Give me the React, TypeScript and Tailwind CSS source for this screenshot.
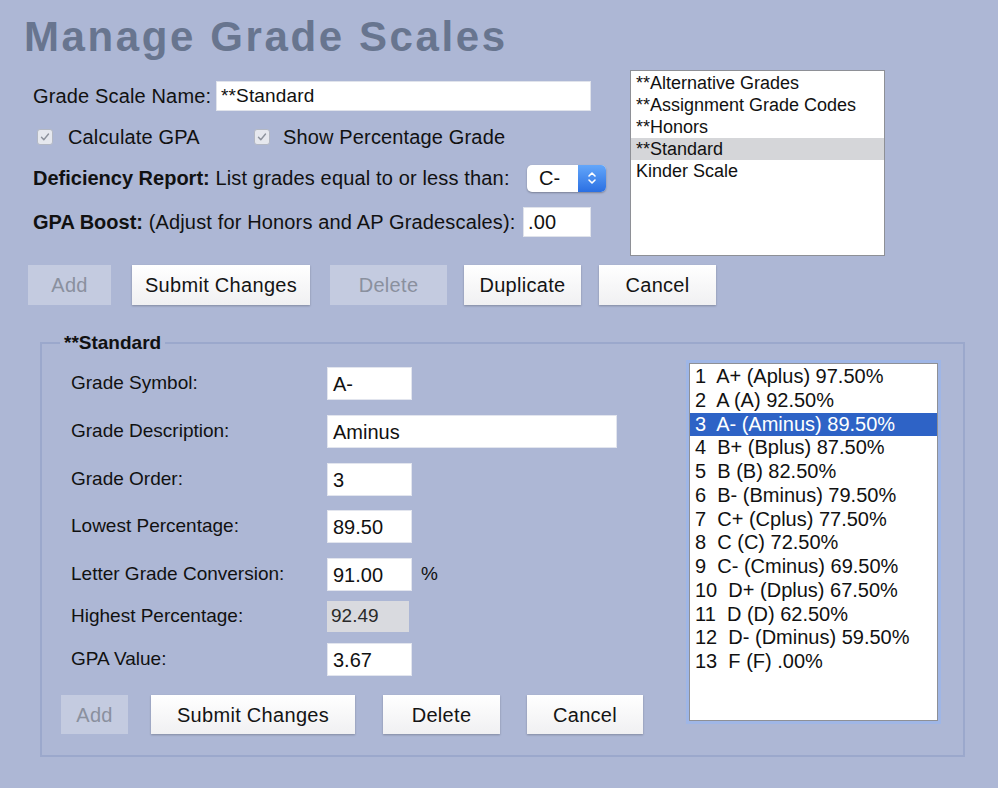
import React from "react";

function Check() {
  return (
    <div className="flex h-[16px] w-[16px] items-center justify-center rounded-[3px] border border-[#b3b8c4] bg-[#e6e8ee]">
      <svg width="12" height="12" viewBox="0 0 12 12">
        <path d="M2.5 6.3 L4.8 8.8 L9.5 3" fill="none" stroke="#8d929c" strokeWidth="1.4" strokeLinecap="round" strokeLinejoin="round" />
      </svg>
    </div>
  );
}

function Btn({ label, w, disabled, ml }: { label: string; w: string; disabled?: boolean; ml: string }) {
  return (
    <div
      className={
        "flex h-full items-center justify-center " +
        w +
        " " +
        ml +
        " " +
        (disabled
          ? "bg-[#c4cbe0] text-[#8a909e]"
          : "bg-gradient-to-b from-[#ffffff] to-[#f0f0f2] text-[#141414] shadow-[0_1px_2px_rgba(0,0,0,0.25)]")
      }
    >
      {label}
    </div>
  );
}

const grades = [
  "1  A+ (Aplus) 97.50%",
  "2  A (A) 92.50%",
  "3  A- (Aminus) 89.50%",
  "4  B+ (Bplus) 87.50%",
  "5  B (B) 82.50%",
  "6  B- (Bminus) 79.50%",
  "7  C+ (Cplus) 77.50%",
  "8  C (C) 72.50%",
  "9  C- (Cminus) 69.50%",
  "10  D+ (Dplus) 67.50%",
  "11  D (D) 62.50%",
  "12  D- (Dminus) 59.50%",
  "13  F (F) .00%",
];

const scales = ["**Alternative Grades", "**Assignment Grade Codes", "**Honors", "**Standard", "Kinder Scale"];

function Field({ label, value, w, mt, gray, suffix }: { label: string; value: string; w: string; mt: string; gray?: boolean; suffix?: string }) {
  return (
    <div className={"flex h-[33px] items-center pl-[29px] " + mt}>
      <div className="w-[256px]">{label}</div>
      {gray ? (
        <div className="flex h-[31px] w-[82px] items-center bg-[#d9dadf] pl-[4px] text-[19px] text-[#2a2a2a]">{value}</div>
      ) : (
        <div className={"flex h-[33px] items-center border border-[#e2e5ee] bg-white pl-[5px] text-[20px] " + w}>{value}</div>
      )}
      {suffix ? <span className="ml-[9px]">{suffix}</span> : null}
    </div>
  );
}

export default function App() {
  return (
    <div className="h-[788px] w-[998px] overflow-hidden bg-[#adb7d5] font-['Liberation_Sans',Arial,sans-serif] text-[#111111]">
      <h1 className="ml-[24px] pt-[16px] text-[42px] font-bold leading-[42px] tracking-[2.6px] text-[#68758f]">Manage Grade Scales</h1>

      <div className="mt-[12px] flex">
        <div className="w-[630px] pl-[33px] pt-[11px] text-[20px] tracking-[0.15px]">
          <div className="flex h-[30px] items-center">
            <div className="w-[183px]">Grade Scale Name:</div>
            <div className="flex h-[30px] w-[375px] items-center border border-[#e0e3eb] bg-white pl-[4px] text-[19px]">**Standard</div>
          </div>
          <div className="mt-[13px] flex h-[26px] items-center">
            <div className="flex w-[221px] items-center pl-[4px]">
              <Check />
              <span className="ml-[15px]">Calculate GPA</span>
            </div>
            <div className="flex items-center">
              <Check />
              <span className="ml-[13px]">Show Percentage Grade</span>
            </div>
          </div>
          <div className="mt-[14px] flex h-[28px] items-center">
            <div className="w-[494px]">
              <span className="font-bold tracking-[0px]">Deficiency Report:</span> List grades equal to or less than:
            </div>
            <div className="flex h-[27px] w-[79px] overflow-hidden rounded-[5px] bg-white shadow-[0_1px_2px_rgba(0,0,0,0.3)]">
              <div className="flex flex-1 items-center pl-[12px]">C-</div>
              <div className="flex w-[28px] items-center justify-center bg-gradient-to-b from-[#63a6fa] to-[#2b6fe2]">
                <svg width="10" height="16" viewBox="0 0 10 16">
                  <path d="M2 6 L5 3 L8 6 M2 10 L5 13 L8 10" fill="none" stroke="#ffffff" strokeWidth="1.6" strokeLinecap="round" strokeLinejoin="round" />
                </svg>
              </div>
            </div>
          </div>
          <div className="mt-[15px] flex h-[30px] items-center">
            <div className="w-[490px]">
              <span className="font-bold tracking-[0px]">GPA Boost:</span> (Adjust for Honors and AP Gradescales):
            </div>
            <div className="flex h-[30px] w-[68px] items-center border border-[#e0e3eb] bg-white pl-[4px] text-[20px]">.00</div>
          </div>
        </div>

        <div className="h-[186px] w-[255px] border border-[#8e9096] bg-white pt-[1px] text-[18px] leading-[22px]">
          {scales.map((s) => (
            <div key={s} className={"pl-[5px] " + (s === "**Standard" ? "bg-[#d5d6d9]" : "")}>
              {s}
            </div>
          ))}
        </div>
      </div>

      <div className="mt-[9px] flex h-[40px] text-[20px] tracking-[0.3px]">
        <Btn label="Add" w="w-[83px]" ml="ml-[28px]" disabled />
        <Btn label="Submit Changes" w="w-[178px]" ml="ml-[21px]" />
        <Btn label="Delete" w="w-[117px]" ml="ml-[20px]" disabled />
        <Btn label="Duplicate" w="w-[117px]" ml="ml-[17px]" />
        <Btn label="Cancel" w="w-[117px]" ml="ml-[18px]" />
      </div>

      <fieldset className="ml-[40px] mt-[28px] h-[424px] w-[925px] border-2 border-[#9ba8cc]">
        <legend className="ml-[18px] px-[4px] text-[19px] font-bold leading-[20px]">**Standard</legend>
        <div className="flex">
          <div className="w-[645px] pt-[14px] text-[19px]">
            <Field label="Grade Symbol:" value="A-" w="w-[85px]" mt="" />
            <Field label="Grade Description:" value="Aminus" w="w-[290px]" mt="mt-[15px]" />
            <Field label="Grade Order:" value="3" w="w-[85px]" mt="mt-[15px]" />
            <Field label="Lowest Percentage:" value="89.50" w="w-[85px]" mt="mt-[14px]" />
            <Field label="Letter Grade Conversion:" value="91.00" w="w-[85px]" mt="mt-[15px]" suffix="%" />
            <Field label="Highest Percentage:" value="92.49" w="w-[85px]" mt="mt-[9px]" gray />
            <Field label="GPA Value:" value="3.67" w="w-[85px]" mt="mt-[10px]" />
            <div className="mt-[19px] flex h-[39px] pl-[19px] text-[20px] tracking-[0.3px]">
              <Btn label="Add" w="w-[67px]" ml="" disabled />
              <Btn label="Submit Changes" w="w-[204px]" ml="ml-[23px]" />
              <Btn label="Delete" w="w-[117px]" ml="ml-[28px]" />
              <Btn label="Cancel" w="w-[116px]" ml="ml-[27px]" />
            </div>
          </div>
          <div className="ml-[2px] mt-[10px] h-[358px] w-[249px] border border-[#8e9096] bg-white pt-[1px] text-[20px] leading-[23.75px] ring-[3px] ring-[#9fb6e6]">
            {grades.map((g, i) => (
              <div key={g} className={"whitespace-pre pl-[5px] " + (i === 2 ? "bg-[#2e63c6] text-white" : "")}>
                {g}
              </div>
            ))}
          </div>
        </div>
      </fieldset>
    </div>
  );
}
